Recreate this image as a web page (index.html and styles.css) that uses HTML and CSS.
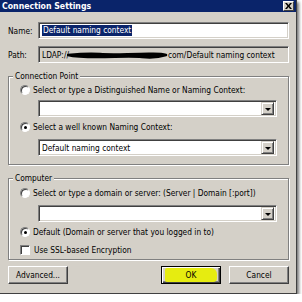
FILE: index.html
```html
<!DOCTYPE html>
<html lang="en">
<head>
    <meta charset="UTF-8">
    <title>Connection Settings</title>
    <link rel="stylesheet" href="styles.css">
</head>
<body>
    <div class="dialog">
        <div class="titlebar">
            <span class="title">Connection Settings</span>
            <span class="close">
                <svg width="7" height="6" viewBox="0 0 7 6"><path d="M0 0h2l1.5 2 1.5-2h2l-2.5 3 2.5 3h-2l-1.5-2-1.5 2h-2l2.5-3z" fill="#000"/></svg>
            </span>
        </div>
        <div class="content">
            <div class="row">
                <span class="label">Name:</span>
                <div class="field"><span class="selected">Default naming context</span></div>
            </div>
            <div class="row">
                <span class="label">Path:</span>
                <div class="field readonly">LDAP://<svg class="redact" width="102" height="8" viewBox="0 0 102 8"><path d="M1 4c10-1 20-2 32-1s28 0 40 0 20-1 26 1c-6 2-14 3-24 2s-28 0-44 0-22 0-30-2z" fill="#000" stroke="#000" stroke-width="2.5" stroke-linejoin="round"/></svg>com/Default naming context</div>
            </div>

            <fieldset class="group first">
                <legend>Connection Point</legend>
                <div class="option"><span class="radio"></span>Select or type a Distinguished Name or Naming Context:</div>
                <div class="combo"><div class="combo-text"></div><span class="arrow"></span></div>
                <div class="option gap"><span class="radio checked"></span>Select a well known Naming Context:</div>
                <div class="combo lower"><div class="combo-text">Default naming context</div><span class="arrow"></span></div>
            </fieldset>

            <fieldset class="group second">
                <legend>Computer</legend>
                <div class="option"><span class="radio"></span>Select or type a domain or server: (Server | Domain [:port])</div>
                <div class="combo lower"><div class="combo-text"></div><span class="arrow"></span></div>
                <div class="option gap"><span class="radio checked"></span>Default (Domain or server that you logged in to)</div>
                <div class="option check-row"><span class="checkbox"></span>Use SSL-based Encryption</div>
            </fieldset>

            <div class="buttons">
                <button class="btn">Advanced...</button>
                <button class="btn ok"><span class="marker">OK</span></button>
                <button class="btn">Cancel</button>
            </div>
        </div>
    </div>
</body>
</html>
```

FILE: styles.css
```css
body {
    margin: 0;
    background: #fff;
    font-family: "DejaVu Sans Condensed", "Liberation Sans", sans-serif;
    font-size: 8.3px;
    color: #000;
}
.dialog {
    width: 296px;
    height: 293px;
    background: #d4d0c8;
    border-right: 1px solid #404040;
    border-bottom: 1px solid #404040;
    box-shadow: 2px 2px 3px rgba(0, 0, 0, 0.55);
    display: flex;
    flex-direction: column;
}
.titlebar {
    height: 14px;
    background: #0a246a;
    display: flex;
    align-items: center;
    justify-content: space-between;
    padding: 0 2px 0 2px;
}
.title {
    color: #fff;
    font-weight: bold;
    font-size: 8.7px;
}
.close {
    width: 9px;
    height: 8px;
    background: #d4d0c8;
    border: 1px solid;
    border-color: #fff #404040 #404040 #fff;
    display: flex;
    align-items: center;
    justify-content: center;
}
.content {
    padding: 10px 7px 9px 8px;
    display: flex;
    flex-direction: column;
}
.row {
    display: flex;
    align-items: center;
    height: 17px;
    margin-bottom: 7px;
}
.label {
    width: 30px;
}
.field {
    flex: 1;
    height: 13px;
    background: #fff;
    border: 1px solid;
    border-color: #808080 #fff #fff #808080;
    box-shadow: inset 1px 1px #404040, inset -1px -1px #d4d0c8;
    padding: 1px 3px 1px 3px;
    display: flex;
    align-items: center;
    white-space: nowrap;
    overflow: hidden;
}
.field.readonly {
    background: #d4d0c8;
}
.selected {
    background: #0a246a;
    color: #fff;
    line-height: 11px;
    padding: 0 1px;
}
.redact {
    margin: 0 -1px 0 -2px;
}
.group {
    margin: 0;
    padding: 0 0 8px 0;
    border: 1px solid #808080;
    box-shadow: inset 1px 1px #fff, 1px 1px #fff;
}
.group.second {
    margin-top: 7px;
    padding-bottom: 3px;
}
.group legend {
    margin-left: 4px;
    padding: 0 2px;
    line-height: 12px;
    background: #d4d0c8;
}
.option {
    display: flex;
    align-items: center;
    height: 12px;
    margin: 2px 0 0 11px;
    white-space: nowrap;
}
.second .option {
    margin-top: 3px;
}
.option.gap {
    margin-top: 4px;
}
.second .option.check-row {
    margin-top: 6px;
}
.radio {
    width: 8px;
    height: 8px;
    border-radius: 50%;
    background: #fff;
    border: 1px solid;
    border-color: #808080 #fff #fff #808080;
    box-shadow: inset 1px 1px #404040;
    margin-right: 3px;
    display: flex;
    align-items: center;
    justify-content: center;
}
.radio.checked::after {
    content: "";
    width: 3px;
    height: 3px;
    border-radius: 50%;
    background: #000;
}
.checkbox {
    width: 8px;
    height: 8px;
    background: #fff;
    border: 1px solid;
    border-color: #808080 #fff #fff #808080;
    box-shadow: inset 1px 1px #404040;
    margin-right: 4px;
}
.combo {
    width: 239px;
    height: 17px;
    box-sizing: border-box;
    margin: 4px 0 0 29px;
    background: #fff;
    border: 1px solid;
    border-color: #808080 #fff #fff #808080;
    box-shadow: inset 1px 1px #404040, inset -1px -1px #d4d0c8;
    display: flex;
    align-items: center;
    padding: 2px;
}
.combo.lower {
    margin-top: 6px;
}
.combo-text {
    flex: 1;
    padding-left: 1px;
    white-space: nowrap;
}
.arrow {
    width: 13px;
    height: 13px;
    box-sizing: border-box;
    background: #d4d0c8;
    border: 1px solid;
    border-color: #d4d0c8 #404040 #404040 #d4d0c8;
    box-shadow: inset 1px 1px #fff, inset -1px -1px #808080;
    display: flex;
    align-items: center;
    justify-content: center;
}
.arrow::after {
    content: "";
    border-left: 3px solid transparent;
    border-right: 3px solid transparent;
    border-top: 3px solid #000;
    margin-top: 1px;
}
.buttons {
    display: flex;
    margin-top: 6px;
    gap: 8px;
}
.btn {
    width: 60px;
    height: 18px;
    padding: 0;
    font-family: inherit;
    font-size: 8.3px;
    color: #000;
    background: #d4d0c8;
    border: 1px solid;
    border-color: #fff #404040 #404040 #fff;
    box-shadow: inset -1px -1px #808080;
}
.btn.ok {
    margin-left: auto;
    border: 1px solid #000;
    box-shadow: inset 1px 1px #fff, inset -1px -1px #404040, inset -2px -2px #808080;
    display: flex;
    align-items: center;
    justify-content: center;
}
.marker {
    display: flex;
    align-items: center;
    justify-content: center;
    width: 52px;
    height: 14px;
    background: #e6ec10;
    border-radius: 2px 6px 4px 2px;
}
```
